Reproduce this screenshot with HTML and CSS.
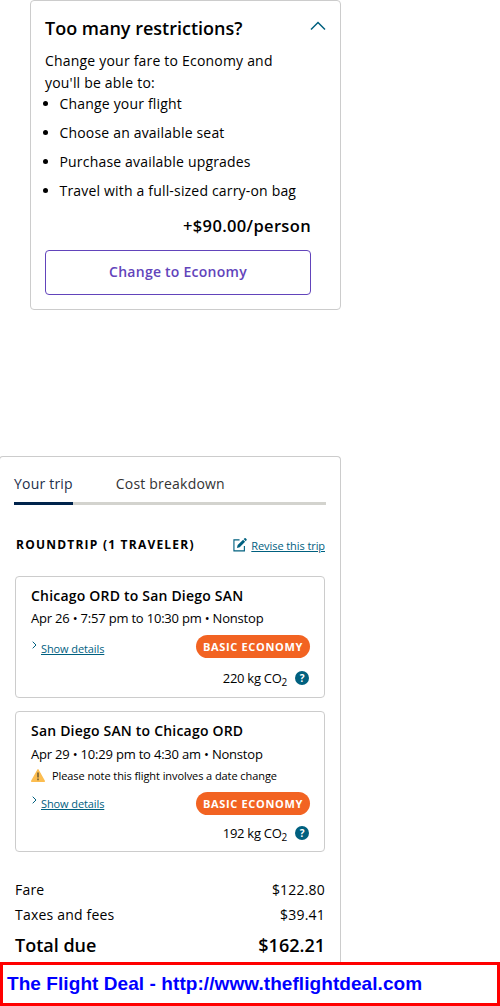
FILE: index.html
```html
<!DOCTYPE html>
<html lang="en">
<head>
	<meta charset="UTF-8">
	<meta name="viewport" content="width=device-width, initial-scale=1.0">
	<title>Your trip</title>
	<link rel="stylesheet" href="styles.css">
</head>
<body>

	<section class="upsell">
		<div class="upsell-head">
			<h2>Too many restrictions?</h2>
			<svg class="chevron-up" width="16" height="10" viewBox="0 0 16 10"><path d="M1 8.5L8 1.5L15 8.5" fill="none" stroke="#00607f" stroke-width="1.5"/></svg>
		</div>
		<p class="intro">Change your fare to Economy and<br>you'll be able to:</p>
		<ul>
			<li>Change your flight</li>
			<li>Choose an available seat</li>
			<li>Purchase available upgrades</li>
			<li>Travel with a full-sized carry-on bag</li>
		</ul>
		<div class="price">+$90.00/person</div>
		<button class="change">Change to Economy</button>
	</section>

	<section class="trip">
		<div class="tabs">
			<span class="tab active">Your trip</span>
			<span class="tab">Cost breakdown</span>
		</div>

		<div class="trip-head">
			<h3>ROUNDTRIP (1 TRAVELER)</h3>
			<a class="revise">
				<svg width="14" height="14" viewBox="0 0 15 15"><path d="M7 2H1V13.8H12.2V8.5" fill="none" stroke="#00607f" stroke-width="1.2"/><path d="M4.2 10.6L5 7.6L10.8 1.8L13 4L7.2 9.8Z M11.4 1.2L12.4 0.2Q13 -0.2 13.6 0.4L14.4 1.2Q15 1.8 14.5 2.4L13.6 3.4Z" fill="#00607f"/></svg>
				<span>Revise this trip</span>
			</a>
		</div>

		<div class="flight">
			<h4>Chicago ORD to San Diego SAN</h4>
			<p class="times">Apr 26 • 7:57 pm to 10:30 pm • Nonstop</p>
			<div class="fare-row">
				<a class="details">
					<svg width="5" height="8" viewBox="0 0 5 8"><path d="M0.7 0.7L4 4L0.7 7.3" fill="none" stroke="#00607f"/></svg>
					<span>Show details</span>
				</a>
				<span class="badge">BASIC ECONOMY</span>
			</div>
			<div class="co2">
				<span class="amount">220 kg CO<sub>2</sub></span>
				<span class="help">?</span>
			</div>
		</div>

		<div class="flight return">
			<h4>San Diego SAN to Chicago ORD</h4>
			<p class="times">Apr 29 • 10:29 pm to 4:30 am • Nonstop</p>
			<p class="notice">
				<svg width="14" height="13" viewBox="0 0 14 13"><path d="M7 0.8L13.3 12.2H0.7Z" fill="#fcbd50" stroke="#fcbd50" stroke-width="1.4" stroke-linejoin="round"/><path d="M7 3.6V8.4M7 9.6V11.2" stroke="#6b5a35" stroke-width="1.5"/></svg>
				<span>Please note this flight involves a date change</span>
			</p>
			<div class="fare-row">
				<a class="details">
					<svg width="5" height="8" viewBox="0 0 5 8"><path d="M0.7 0.7L4 4L0.7 7.3" fill="none" stroke="#00607f"/></svg>
					<span>Show details</span>
				</a>
				<span class="badge">BASIC ECONOMY</span>
			</div>
			<div class="co2">
				<span class="amount">192 kg CO<sub>2</sub></span>
				<span class="help">?</span>
			</div>
		</div>

		<div class="totals">
			<div class="line"><span>Fare</span><span>$122.80</span></div>
			<div class="line"><span>Taxes and fees</span><span>$39.41</span></div>
			<div class="line total"><span>Total due</span><span>$162.21</span></div>
		</div>
	</section>

	<footer class="banner">The Flight Deal - http://www.theflightdeal.com</footer>

</body>
</html>
```
FILE: styles.css
```css
* {
	box-sizing: border-box;
}
body {
	margin: 0;
	width: 500px;
	height: 1006px;
	overflow: hidden;
	background: #fff;
	color: #000;
	font-family: "Open Sans", "Noto Sans", sans-serif;
	font-size: 14px;
	display: flex;
	flex-direction: column;
}
h2, h3, h4, p, ul {
	margin: 0;
	padding: 0;
}
svg {
	display: block;
	flex: none;
}

/* fare upgrade card */
.upsell {
	width: 311px;
	height: 310px;
	margin-left: 30px;
	padding: 15px 29px 0 14px;
	border: 1px solid #ccc;
	border-radius: 4px;
}
.upsell-head {
	display: flex;
	justify-content: space-between;
	margin-right: -15px;
	height: 34px;
}
.upsell-head h2 {
	font-size: 18px;
	font-weight: 600;
	line-height: 24px;
}
.chevron-up {
	margin-top: 5px;
}
.intro {
	line-height: 22px;
	letter-spacing: 0.2px;
}
.upsell ul {
	margin-top: -1px;
	padding-left: 14.5px;
}
.upsell li {
	line-height: 22px;
	margin-bottom: 7px;
	letter-spacing: 0.18px;
}
.price {
	margin-top: 12px;
	height: 36px;
	line-height: 24px;
	font-size: 16.5px;
	font-weight: 600;
	letter-spacing: 0.35px;
	text-align: right;
}
.change {
	display: block;
	width: 266px;
	height: 45px;
	padding: 0 0 2px;
	border: 1px solid #6244bb;
	border-radius: 4px;
	background: #fff;
	color: #6244bb;
	font-family: inherit;
	font-size: 14px;
	font-weight: 600;
	letter-spacing: 0.25px;
}

/* trip summary */
.trip {
	width: 342px;
	height: 506px;
	margin: 146px 0 0 -1px;
	padding: 14px 15px 0;
	border: 1px solid #ccc;
	border-bottom: 0;
	border-radius: 4px 4px 0 0;
}
.tabs {
	display: flex;
	gap: 43px;
	height: 34px;
	margin: 0 -1px 0 -1px;
	box-shadow: inset 0 -3px #d3d3ce;
}
.tab {
	height: 34px;
	line-height: 26px;
	color: #333;
	letter-spacing: 0.2px;
}
.tab.active {
	color: #23304b;
	border-bottom: 3px solid #00234b;
}
.trip-head {
	display: flex;
	justify-content: space-between;
	margin-top: 29px;
	height: 42px;
}
.trip-head h3 {
	padding-left: 1px;
	font-size: 12px;
	font-weight: 700;
	line-height: 22px;
	letter-spacing: 1.22px;
}
.revise {
	display: flex;
	gap: 4px;
	padding-top: 4px;
	color: #00607f;
	font-size: 11px;
	line-height: 16px;
	letter-spacing: -0.08px;
}
.revise span, .details span {
	text-decoration: underline;
}
.flight {
	height: 122px;
	padding: 8px 14px 0 15px;
	border: 1px solid #ccc;
	border-radius: 4px;
}
.flight.return {
	height: 141px;
	margin-top: 13px;
}
.flight h4 {
	font-size: 14px;
	font-weight: 600;
	line-height: 22px;
	letter-spacing: 0.2px;
}
.times {
	height: 24px;
	font-size: 13px;
	line-height: 22px;
	letter-spacing: -0.2px;
}
.return .times {
	height: 25px;
	line-height: 24px;
}
.notice {
	display: flex;
	align-items: center;
	gap: 7px;
	height: 16px;
	font-size: 11px;
	letter-spacing: -0.08px;
}
.fare-row {
	display: flex;
	justify-content: space-between;
	margin-top: 4px;
	height: 23px;
}
.return .fare-row {
	margin-top: 9px;
}
.details {
	display: flex;
	gap: 4px;
	padding: 6px 0 0 1px;
	color: #00607f;
	font-size: 11px;
	line-height: 16px;
	letter-spacing: -0.1px;
}
.return .details {
	padding-top: 4px;
}
.badge {
	height: 23px;
	padding: 0 7px;
	border-radius: 12px;
	background: #f26322;
	color: #fff;
	font-size: 11px;
	font-weight: 700;
	line-height: 23px;
	letter-spacing: 0.66px;
}
.co2 {
	display: flex;
	justify-content: flex-end;
	align-items: center;
	gap: 8px;
	margin-top: 11px;
	padding-right: 1px;
	height: 18px;
	font-size: 13px;
	line-height: 18px;
	letter-spacing: -0.28px;
}
.return .co2 {
	margin-top: 9px;
}
.co2 sub {
	position: relative;
	top: -1px;
	font-size: 10px;
	line-height: 0;
}
.help {
	width: 14px;
	height: 14px;
	border-radius: 50%;
	background: #00607f;
	color: #fff;
	font-size: 10px;
	font-weight: 700;
	line-height: 14px;
	text-align: center;
}
.totals {
	margin-top: 25px;
}
.line {
	display: flex;
	justify-content: space-between;
	line-height: 25px;
	letter-spacing: 0.2px;
}
.total {
	font-size: 18px;
	font-weight: 600;
	line-height: 36px;
	letter-spacing: 0;
}

.banner {
	height: 44px;
	padding-left: 4px;
	border: 3px solid #f00;
	color: #00f;
	font: bold 19px/38px "Liberation Sans", Arial, sans-serif;
	letter-spacing: 0.07px;
}
```
